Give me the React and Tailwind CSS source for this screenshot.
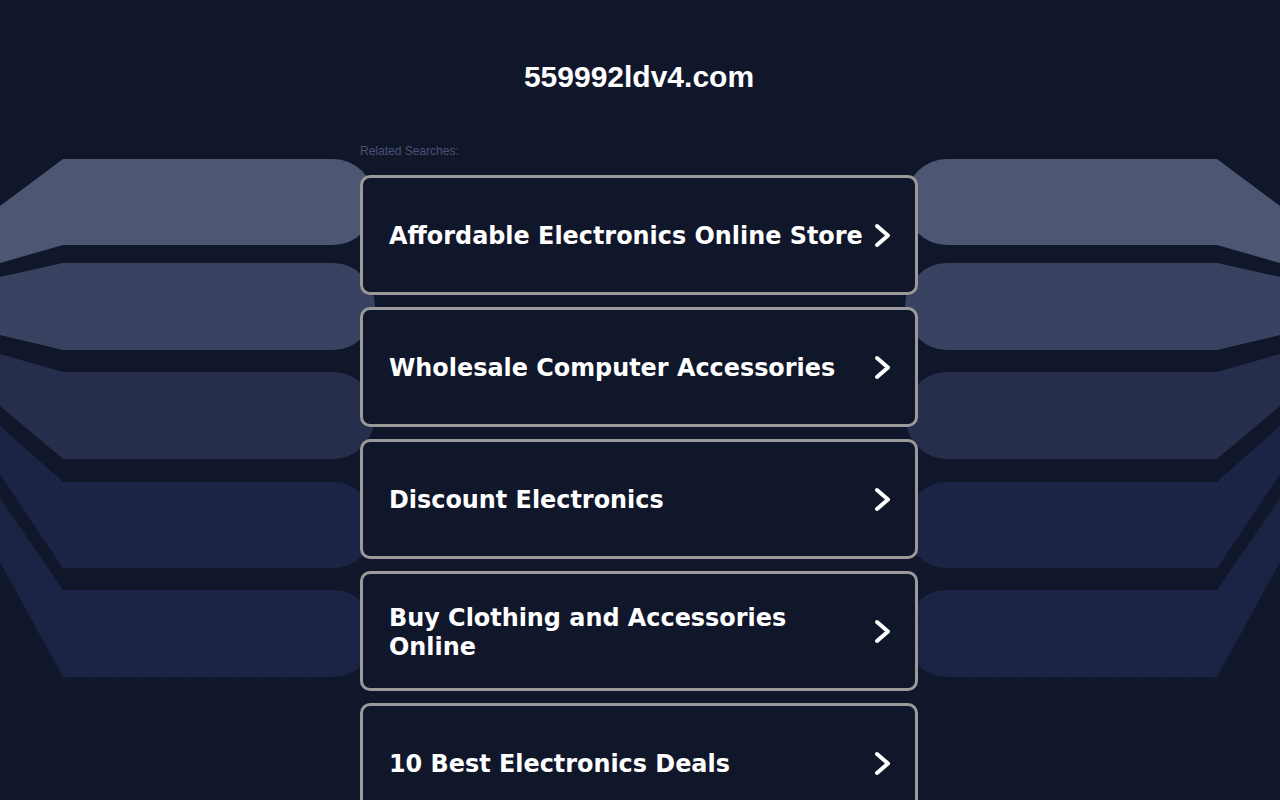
import React from 'react'

const searches = [
  'Affordable Electronics Online Store',
  'Wholesale Computer Accessories',
  'Discount Electronics',
  'Buy Clothing and Accessories Online',
  '10 Best Electronics Deals',
]

// left side fan of bands: [left edge top, left edge bottom, flat top, flat bottom, colour]
const bands = [
  [206, 263, 159, 245, '#4d5673'],
  [277, 335, 263, 350, '#3a4261'],
  [354, 406, 372, 459, '#262e4c'],
  [426, 474, 482, 568, '#1c2446'],
  [498, 562, 590, 677, '#1b2345'],
]

const bandPath = ([a, b, t, u]) => {
  const cx = 333
  return `M0 ${a} L63 ${t} L${cx} ${t} A42 ${(u - t) / 2} 0 0 1 ${cx} ${u} L63 ${u} L0 ${b} Z`
}

const Side = () =>
  bands.map((b, i) => (
    <g key={i}>
      <path d={bandPath(b)} fill={b[4]} />
      {i > 2 && <path d={bandPath(b)} fill="url(#dots)" />}
    </g>
  ))

const Backdrop = () => (
  <svg className="absolute left-0 top-0" width="1280" height="800" viewBox="0 0 1280 800">
    <defs>
      <pattern id="dots" width="3" height="3" patternUnits="userSpaceOnUse">
        <rect x="0" y="0" width="1" height="1" fill="#1e2649" />
      </pattern>
    </defs>
    <g>
      <Side />
    </g>
    <g transform="translate(1280,0) scale(-1,1)">
      <Side />
    </g>
  </svg>
)

const Chevron = () => (
  <svg width="17" height="25" viewBox="0 0 17 25" className="shrink-0">
    <polyline points="3,3 14,12.5 3,22" fill="none" stroke="#fff" strokeWidth="4" strokeLinecap="round" strokeLinejoin="round" />
  </svg>
)

export default function App() {
  return (
    <div className="relative min-h-screen overflow-hidden bg-[#11172b] pb-10">
      <Backdrop />
      <div className="relative mx-auto w-[560px] pr-[2px]">
        <h1 className="pt-[60px] text-center font-['Liberation_Sans',Arial,sans-serif] text-[30px] font-bold leading-[34px] text-white">
          559992ldv4.com
        </h1>
        <p className="mt-[50px] font-['Liberation_Sans',Arial,sans-serif] text-[12px] leading-[14px] text-[#4a5272]">
          Related Searches:
        </p>
        <div className="mt-[17px] flex flex-col gap-[12px]">
          {searches.map((s) => (
            <a
              key={s}
              href="#"
              className="flex h-[120px] items-center justify-between gap-2 rounded-[10px] border-[3px] border-[#9a9a9a] bg-[#11172b] pl-[26px] pr-[24px]"
            >
              <span className="pt-[3px] font-['DejaVu_Sans',Verdana,sans-serif] text-[23.9px] font-bold leading-[29px] text-white">
                {s}
              </span>
              <Chevron />
            </a>
          ))}
        </div>
      </div>
    </div>
  )
}
